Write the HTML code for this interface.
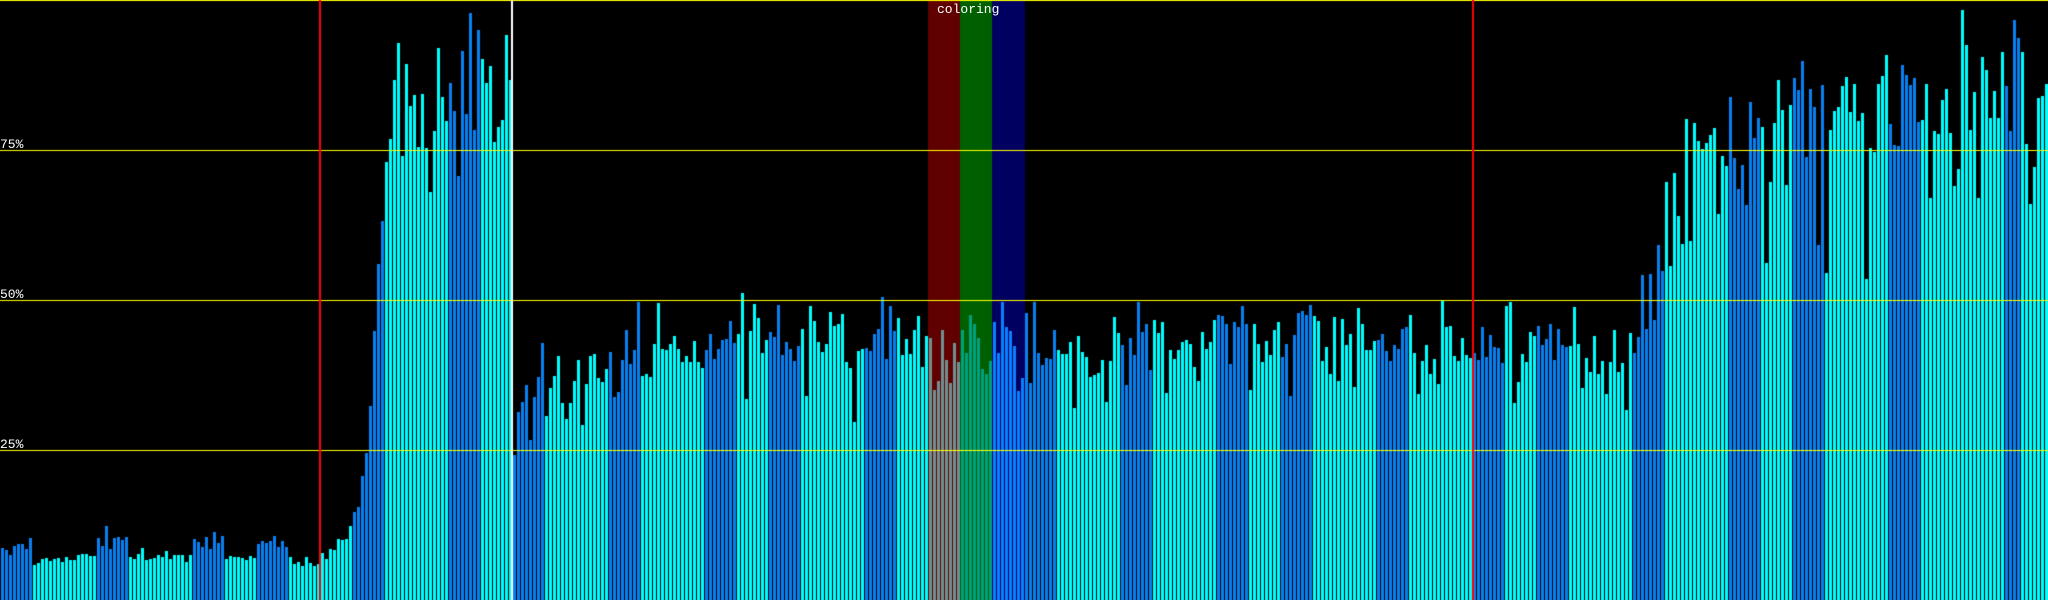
<!DOCTYPE html>
<html><head><meta charset="utf-8"><style>
html,body{margin:0;padding:0;background:#000;width:2048px;height:600px;overflow:hidden}
#c{position:absolute;left:0;top:0}
.t{position:absolute;color:#fff;font-family:"Liberation Mono",monospace;font-size:13px;line-height:13px}
</style></head><body>
<canvas id="c" width="2048" height="600"></canvas>
<div class="t" style="left:0;top:138px">75%</div>
<div class="t" style="left:0;top:288px">50%</div>
<div class="t" style="left:0;top:438px">25%</div>
<div class="t" style="left:937px;top:3px">coloring</div>
<script>
var H=[52,50,45,54,56,56,51,62,
35,37,41,42,39,41,42,38,43,40,40,45,46,46,44,44,
62,54,74,51,62,63,60,63,
43,41,46,52,40,41,42,45,43,49,41,45,45,45,38,45,
61,58,53,63,51,68,57,64,
41,44,43,43,42,40,44,42,
56,59,57,59,64,53,59,53,
43,36,38,34,43,37,34,36,47,41,51,50,61,60,61,74,
88,93,124,147,194,269,336,379,
438,461,520,557,444,536,494,505,453,506,452,408,469,552,503,479,
517,489,424,549,486,587,470,570,
541,517,534,458,473,480,565,520,
145,188,198,215,160,203,223,257,
184,212,224,244,197,181,197,219,240,175,216,244,246,222,218,231,
248,203,208,240,270,236,250,298,
224,226,223,256,297,251,250,256,264,251,238,244,238,259,238,232,250,266,
241,251,260,261,279,257,266,307,
201,269,296,282,247,260,268,263,
295,245,258,251,239,254,271,204,
294,279,258,248,256,288,274,276,
286,238,232,178,249,251,252,249,
266,271,303,241,294,269,282,245,
261,246,270,284,233,264,262,210,
219,270,240,217,257,238,270,247,
285,276,262,231,226,239,278,247,
298,273,269,254,209,222,287,217,
298,247,235,242,241,270,250,246,
246,258,192,264,248,243,223,225,
227,240,198,239,283,267,255,215,
262,245,298,268,276,230,280,267,
278,207,250,241,250,258,260,256,
233,219,268,251,258,280,285,284,
276,236,278,273,294,276,210,276,
256,238,259,245,270,278,243,256,
204,265,287,289,285,295,284,279,
239,253,226,283,219,281,255,266,
213,292,276,250,250,259,260,266,
249,239,255,251,271,273,285,247,
206,239,255,226,241,216,299,273,
274,244,239,262,245,242,247,240,
273,243,265,253,252,237,294,298,
197,218,246,238,268,264,274,255,
261,276,240,271,255,253,254,293,
256,212,242,228,264,226,239,206,
238,270,228,237,190,267,247,263,
325,271,326,280,355,329,418,334,
427,384,356,481,359,477,459,451,
457,465,472,386,444,434,503,442,
411,435,395,498,462,482,473,337,
418,477,520,490,415,495,522,510,
539,443,511,493,355,515,327,470,
489,493,514,523,488,516,479,487,
321,452,448,516,524,545,476,455,
454,535,525,515,522,478,480,516,
402,469,466,500,511,467,414,431,
590,555,470,508,402,543,530,482,
509,482,548,514,469,580,562,548,
456,396,433,502,504,516,516,509];
var P="BCCBCCBCBCCBCCBCBCCBCCBCBCCBCCCBBCCBCCBCBCCBCCBCBCCBCCBCBCCBCCCB";
var c=document.getElementById('c').getContext('2d');
c.fillStyle='#000';c.fillRect(0,0,2048,600);
c.fillStyle='#600000';c.fillRect(928,0,32,600);
c.fillStyle='#006000';c.fillRect(960,0,32,600);
c.fillStyle='#000060';c.fillRect(992,0,33,600);
for(var i=0;i<512;i++){
  var h=H[i]||250;
  var col=P[i>>3];
  if(i>=496){col=(i>=501&&i<=504)?'B':'C';}
  var x=4*i+1;
  var f=col=='B'?'#0a80f0':'#00ffff';
  if(x>=928&&x<960) f=col=='B'?'#5070a0':'#709090';
  else if(x>=960&&x<992) f=col=='B'?'#006090':'#00a080';
  else if(x>=992&&x<1025) f=col=='B'?'#0a80ff':'#00c0ff';
  c.fillStyle=f;
  c.fillRect(x,600-h,3,h);
}
c.fillStyle='#ffff00';
c.fillRect(0,0,2048,1);c.fillRect(0,150,2048,1);c.fillRect(0,300,2048,1);c.fillRect(0,450,2048,1);
c.fillStyle='#ff0000';c.fillRect(319,0,2,600);c.fillRect(1472,0,2,600);
c.fillStyle='#ffffff';c.fillRect(511,0,2,600);
</script>
</body></html>
